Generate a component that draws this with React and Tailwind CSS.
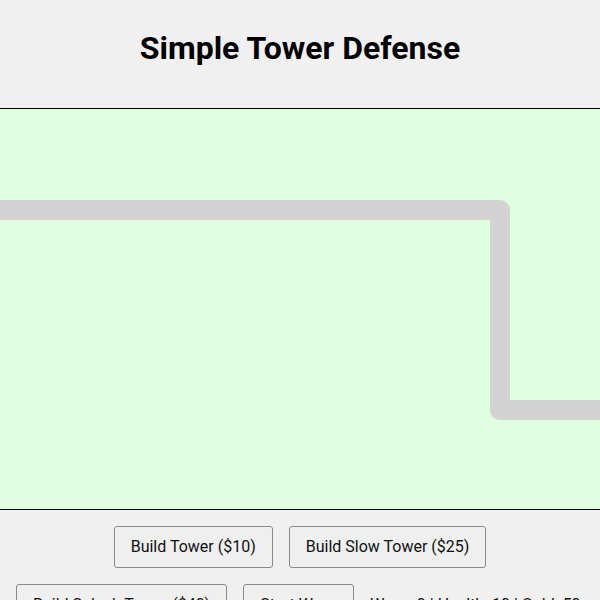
import React from 'react';

const font = { fontFamily: 'Roboto, "Liberation Sans", sans-serif' };

function GameButton({ children }) {
  return (
    <button
      type="button"
      className="shrink-0 whitespace-nowrap rounded-[3px] border border-[#8a8a8a] bg-[#efefef] px-4 py-2 text-base leading-6 text-[#111]"
    >
      {children}
    </button>
  );
}

function PathCanvas() {
  return (
    <div className="h-[402px] w-full border-y border-black bg-[#e0ffe0]">
      <svg width="600" height="400" viewBox="0 0 600 400" className="block">
        <polyline
          points="-20,101 500,101 500,301 620,301"
          fill="none"
          stroke="#d3d3d3"
          strokeWidth="20"
          strokeLinejoin="round"
        />
      </svg>
    </div>
  );
}

export default function App() {
  return (
    <div className="h-[600px] w-[600px] overflow-hidden bg-[#f0f0f0]" style={font}>
      <div className="flex h-[108px] items-center justify-center pb-[12px]">
        <h1 className="text-[32px] font-bold text-black">Simple Tower Defense</h1>
      </div>
      <PathCanvas />
      <div className="mt-4 flex justify-center gap-4">
        <GameButton>Build Tower ($10)</GameButton>
        <GameButton>Build Slow Tower ($25)</GameButton>
      </div>
      <div className="mt-4 flex items-center gap-4 pl-4">
        <GameButton>Build Splash Tower ($40)</GameButton>
        <GameButton>Start Wave</GameButton>
        <span className="whitespace-nowrap text-base text-[#111]">Wave: 0 | Health: 10 | Gold: 50</span>
      </div>
    </div>
  );
}
